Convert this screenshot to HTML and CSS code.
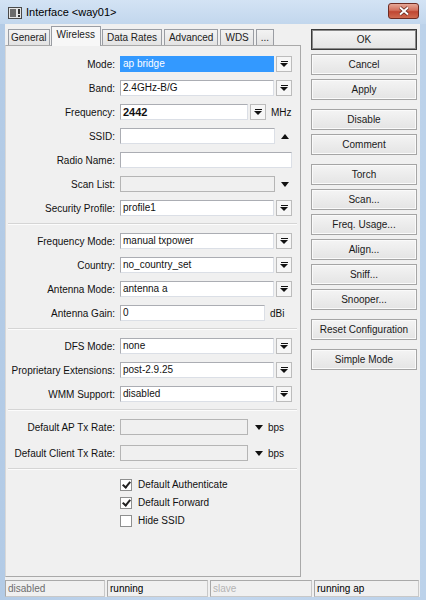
FILE: index.html
```html
<!DOCTYPE html>
<html lang="en">
<head>
    <meta charset="UTF-8">
    <title>Interface &lt;way01&gt;</title>
    <link rel="stylesheet" href="styles.css">
</head>
<body>
    <div class="window">
        <div class="titlebar">
            <svg class="app-icon" width="14" height="12" viewBox="0 0 14 12">
                <rect x="0.5" y="0.5" width="13" height="11" fill="#e4e4e4" stroke="#4a4a4a"/>
                <rect x="2" y="2" width="6" height="8" fill="#6b6b6b"/>
                <rect x="10" y="2" width="2" height="5" fill="#333"/>
                <rect x="10" y="8" width="2" height="2" fill="#333"/>
            </svg>
            <span class="title">Interface &lt;way01&gt;</span>
            <div class="close">
                <svg width="12" height="10" viewBox="0 0 12 10">
                    <path d="M2 1.5l8 7M10 1.5l-8 7" stroke="#5a2018" stroke-width="3.4"/>
                    <path d="M2 1.5l8 7M10 1.5l-8 7" stroke="#fff" stroke-width="2"/>
                </svg>
            </div>
        </div>

        <div class="client">
            <div class="main">
                <div class="left">
                    <div class="tabs">
                        <div class="tab">General</div>
                        <div class="tab active">Wireless</div>
                        <div class="tab">Data Rates</div>
                        <div class="tab">Advanced</div>
                        <div class="tab">WDS</div>
                        <div class="tab">...</div>
                    </div>

                    <div class="panel">
                        <div class="section">
                            <div class="row">
                                <span class="label">Mode:</span>
                                <span class="input in-combo selected">ap bridge</span>
                                <span class="drop"></span>
                            </div>
                            <div class="row">
                                <span class="label">Band:</span>
                                <span class="input in-combo">2.4GHz-B/G</span>
                                <span class="drop"></span>
                            </div>
                            <div class="row">
                                <span class="label">Frequency:</span>
                                <span class="input in-short bold">2442</span>
                                <span class="drop"></span>
                                <span class="unit">MHz</span>
                            </div>
                            <div class="row">
                                <span class="label">SSID:</span>
                                <span class="input in-arrow"></span>
                                <span class="tri-up"></span>
                            </div>
                            <div class="row">
                                <span class="label">Radio Name:</span>
                                <span class="input in-full"></span>
                            </div>
                            <div class="row">
                                <span class="label">Scan List:</span>
                                <span class="input in-arrow disabled"></span>
                                <span class="tri-down"></span>
                            </div>
                            <div class="row">
                                <span class="label">Security Profile:</span>
                                <span class="input in-combo">profile1</span>
                                <span class="drop"></span>
                            </div>
                        </div>

                        <div class="sep"></div>

                        <div class="section">
                            <div class="row">
                                <span class="label">Frequency Mode:</span>
                                <span class="input in-combo">manual txpower</span>
                                <span class="drop"></span>
                            </div>
                            <div class="row">
                                <span class="label">Country:</span>
                                <span class="input in-combo">no_country_set</span>
                                <span class="drop"></span>
                            </div>
                            <div class="row">
                                <span class="label">Antenna Mode:</span>
                                <span class="input in-combo">antenna a</span>
                                <span class="drop"></span>
                            </div>
                            <div class="row">
                                <span class="label">Antenna Gain:</span>
                                <span class="input in-gain">0</span>
                                <span class="unit">dBi</span>
                            </div>
                        </div>

                        <div class="sep"></div>

                        <div class="section">
                            <div class="row">
                                <span class="label">DFS Mode:</span>
                                <span class="input in-combo">none</span>
                                <span class="drop"></span>
                            </div>
                            <div class="row">
                                <span class="label">Proprietary Extensions:</span>
                                <span class="input in-combo">post-2.9.25</span>
                                <span class="drop"></span>
                            </div>
                            <div class="row">
                                <span class="label">WMM Support:</span>
                                <span class="input in-combo">disabled</span>
                                <span class="drop"></span>
                            </div>
                        </div>

                        <div class="sep"></div>

                        <div class="section rates">
                            <div class="row">
                                <span class="label">Default AP Tx Rate:</span>
                                <span class="input in-short disabled"></span>
                                <span class="tri-down rate-arrow"></span>
                                <span class="unit">bps</span>
                            </div>
                            <div class="row">
                                <span class="label">Default Client Tx Rate:</span>
                                <span class="input in-short disabled"></span>
                                <span class="tri-down rate-arrow"></span>
                                <span class="unit">bps</span>
                            </div>
                        </div>

                        <div class="sep"></div>

                        <div class="section checks">
                            <label class="check-row"><span class="check checked"></span>Default Authenticate</label>
                            <label class="check-row"><span class="check checked"></span>Default Forward</label>
                            <label class="check-row"><span class="check"></span>Hide SSID</label>
                        </div>
                    </div>
                </div>

                <div class="buttons">
                    <div class="group">
                        <div class="btn default">OK</div>
                        <div class="btn">Cancel</div>
                        <div class="btn">Apply</div>
                    </div>
                    <div class="group">
                        <div class="btn">Disable</div>
                        <div class="btn">Comment</div>
                    </div>
                    <div class="group">
                        <div class="btn">Torch</div>
                        <div class="btn">Scan...</div>
                        <div class="btn">Freq. Usage...</div>
                        <div class="btn">Align...</div>
                        <div class="btn">Sniff...</div>
                        <div class="btn">Snooper...</div>
                    </div>
                    <div class="group">
                        <div class="btn">Reset Configuration</div>
                    </div>
                    <div class="group">
                        <div class="btn">Simple Mode</div>
                    </div>
                </div>
            </div>

            <div class="status">
                <div class="cell muted">disabled</div>
                <div class="cell">running</div>
                <div class="cell faint">slave</div>
                <div class="cell">running ap</div>
            </div>
        </div>
    </div>
</body>
</html>
```

FILE: styles.css
```css
body {
    margin: 0;
    font-family: "Liberation Sans", Arial, sans-serif;
    font-size: 10px;
    color: #111;
    background: #bcd2ea;
}
.window {
    width: 426px;
    height: 600px;
    display: flex;
    flex-direction: column;
    background: linear-gradient(90deg, #b3cbe6, #c3d7ee 40%, #bcd2ea);
}
.titlebar {
    height: 24px;
    display: flex;
    align-items: center;
    padding: 0 8px 0 8px;
    background: linear-gradient(#d3e3f4, #c2d7ed);
}
.app-icon {
    margin-top: 1px;
}
.title {
    margin-left: 4px;
    font-size: 11px;
    color: #000;
}
.close {
    margin-left: auto;
    margin-right: -1px;
    width: 29px;
    height: 14px;
    border: 1px solid #6e2b22;
    border-radius: 3px;
    background: linear-gradient(#e6a797, #d2705d 45%, #bf4632 55%, #cf6a50);
    display: flex;
    align-items: center;
    justify-content: center;
    margin-top: -2px;
}

.client {
    flex: 1;
    margin: 0 6px 3px 5px;
    padding-top: 3px;
    background: #f0f0f0;
    display: flex;
    flex-direction: column;
}
.main {
    flex: 1;
    display: flex;
}
.left {
    width: 296px;
    display: flex;
    flex-direction: column;
}

/* tabs */
.tabs {
    display: flex;
    align-items: flex-end;
    gap: 2px;
    height: 18px;
    padding-left: 3px;
}
.tab {
    height: 15px;
    line-height: 15px;
    padding: 0 4px;
    border: 1px solid #9a9da3;
    border-bottom: none;
    background: linear-gradient(#f3f3f3, #e3e3e3);
    color: #222;
}
.tab:first-child {
    padding: 0 2px;
}
.tab.active {
    height: 19px;
    line-height: 16px;
    padding: 0 5px;
    margin: 0 -1px;
    background: #f7f7f7;
    position: relative;
    top: 1px;
    z-index: 1;
}

.panel {
    flex: 1;
    border: 1px solid #a9a9a9;
    border-left-color: #d8d8d8;
    padding-top: 10px;
}
.section {
    display: flex;
    flex-direction: column;
    gap: 8px;
}
.section.rates {
    gap: 10px;
}
.sep {
    margin: 7px 3px 8px 2px;
    border-top: 1px solid #d5d5d5;
    border-bottom: 1px solid #fcfcfc;
}
.row {
    height: 16px;
    display: flex;
    align-items: center;
}
.label {
    flex: 0 0 109px;
    text-align: right;
    white-space: nowrap;
}
.input {
    box-sizing: border-box;
    height: 16px;
    margin-left: 5px;
    padding-left: 2px;
    line-height: 14px;
    border: 1px solid #abadb3;
    border-bottom-color: #dbdfe6;
    border-right-color: #dbdfe6;
    background: #fff;
    white-space: nowrap;
}
.input.selected {
    background: #3399ff;
    border-color: #3399ff;
    color: #fff;
}
.input.disabled {
    background: #f0f0f0;
    border-color: #b5b5b5;
}
.bold {
    font-weight: bold;
    font-size: 11px;
}
.in-combo { width: 154px; }
.in-short { width: 128px; }
.in-arrow { width: 155px; }
.in-full { width: 172px; }
.in-gain { width: 145px; }

.drop {
    box-sizing: border-box;
    width: 16px;
    height: 16px;
    margin-left: 2px;
    border: 1px solid #bcbcbc;
    background: #f6f6f6;
    display: flex;
    flex-direction: column;
    align-items: center;
    justify-content: center;
}
.drop::before {
    content: "";
    width: 7px;
    height: 1px;
    background: #111;
    margin-bottom: 1px;
}
.drop::after {
    content: "";
    border-left: 4px solid transparent;
    border-right: 4px solid transparent;
    border-top: 4px solid #111;
}
.tri-down,
.tri-up {
    margin-left: 6px;
    border-left: 4px solid transparent;
    border-right: 4px solid transparent;
}
.tri-down {
    border-top: 5px solid #111;
}
.tri-up {
    border-bottom: 5px solid #111;
}
.tri-down.rate-arrow {
    margin-left: 7px;
}
.unit {
    margin-left: 5px;
}

/* checkboxes */
.checks {
    gap: 5px;
    padding-left: 114px;
}
.check-row {
    height: 13px;
    display: flex;
    align-items: center;
}
.check {
    box-sizing: border-box;
    width: 12px;
    height: 12px;
    margin-right: 6px;
    border: 1px solid #8e8f8f;
    background: #fff;
    position: relative;
}
.check.checked::after {
    content: "";
    position: absolute;
    left: 3px;
    top: 0px;
    width: 3px;
    height: 6px;
    border-right: 2px solid #222;
    border-bottom: 2px solid #222;
    transform: rotate(40deg);
}

/* right column */
.buttons {
    width: 106px;
    margin-left: 10px;
    padding-top: 2px;
    display: flex;
    flex-direction: column;
    gap: 9px;
}
.group {
    display: flex;
    flex-direction: column;
    gap: 4px;
}
.btn {
    box-sizing: border-box;
    height: 21px;
    line-height: 19px;
    text-align: center;
    border: 1px solid #a5a5a5;
    background: linear-gradient(#f4f4f4, #ececec 50%, #e4e4e4);
    box-shadow: inset 0 0 0 1px #fafafa;
    color: #1a1a1a;
    white-space: nowrap;
}
.btn.default {
    border: 1px solid #3a3a3a;
    box-shadow: inset 0 0 0 1px #8a8a8a;
}

/* status bar */
.status {
    height: 17px;
    margin-top: 3px;
    padding-right: 2px;
    display: grid;
    grid-template-columns: 100px 101px 102px 105px;
    gap: 2px;
}
.cell {
    box-sizing: border-box;
    height: 17px;
    line-height: 15px;
    padding-left: 2px;
    border: 1px solid #c8c8c8;
    border-top-color: #a9a9a9;
    border-left-color: #a9a9a9;
    background: #f0f0f0;
    color: #000;
}
.cell.muted {
    color: #6d6d6d;
}
.cell.faint {
    color: #b4b4b4;
}
```
